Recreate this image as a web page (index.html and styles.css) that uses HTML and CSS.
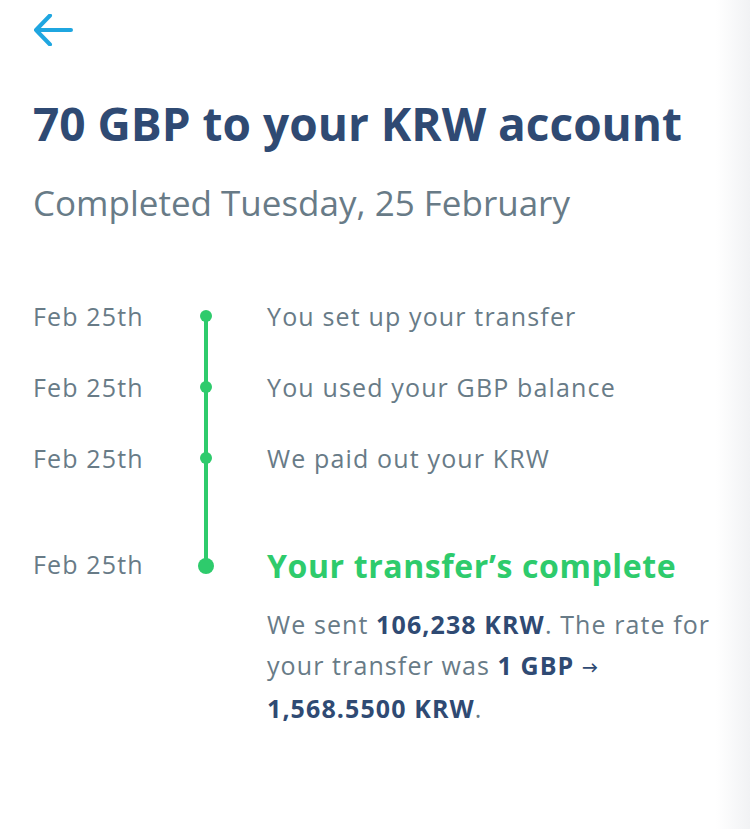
FILE: index.html
```html
<!DOCTYPE html>
<html lang="en">
<head>
    <meta charset="UTF-8">
    <meta name="viewport" content="width=device-width, initial-scale=1.0">
    <title>70 GBP to your KRW account</title>
    <link rel="stylesheet" href="styles.css">
</head>
<body>
  <div class="page">
      <a class="back" href="#" aria-label="Back">
          <svg width="40" height="32" viewBox="0 0 40 32">
              <path d="M38 16H3M17 1.5L3 16l14 14.5" fill="none" stroke="#1fa6e0" stroke-width="4" stroke-linecap="round" stroke-linejoin="round"/>
          </svg>
      </a>

      <h1 class="title">70 GBP to your KRW account</h1>
      <p class="subtitle">Completed Tuesday, 25 February</p>

      <!-- transfer steps -->
      <ol class="timeline">
          <li class="event event-first">
              <span class="event-date">Feb 25th</span>
              <span class="event-marker"><span class="dot"></span></span>
              <div class="event-body">You set up your transfer</div>
          </li>
          <li class="event">
              <span class="event-date">Feb 25th</span>
              <span class="event-marker"><span class="dot"></span></span>
              <div class="event-body">You used your GBP balance</div>
          </li>
          <li class="event">
              <span class="event-date">Feb 25th</span>
              <span class="event-marker"><span class="dot"></span></span>
              <div class="event-body">We paid out your KRW</div>
          </li>
          <li class="event event-done">
              <span class="event-date">Feb 25th</span>
              <span class="event-marker"><span class="dot"></span></span>
              <div class="event-body">
                  <h2>Your transfer’s complete</h2>
                  <p>We sent <strong>106,238 KRW</strong>. The rate for your transfer was <strong>1 GBP <span class="arrow">→</span> 1,568.5500 KRW</strong>.</p>
              </div>
          </li>
      </ol>
  </div>
</body>
</html>
```

FILE: styles.css
```css
body {
    font-family: "Open Sans", Lato, sans-serif;
    margin: 0;
    padding: 0;
    color: #687b87;
    background: linear-gradient(to right, #fff 0, #fff 716px, #f1f2f4 750px);
    min-height: 829px;
}
.page {
    padding: 14px 30px 40px 33px;
}
.back {
    display: block;
    width: 40px;
    height: 32px;
}
.back svg {
    display: block;
}
.title {
    margin: 48px 0 0;
    font-size: 46px;
    line-height: 58px;
    font-weight: 700;
    color: #2f4a73;
}
.subtitle {
    margin: 29px 0 0;
    font-size: 35px;
    line-height: 44px;
    font-weight: 400;
}
.timeline {
    list-style: none;
    margin: 73px 0 0;
    padding: 0;
}
.event {
    display: grid;
    grid-template-columns: 150px 46px 1fr;
    font-size: 25px;
    line-height: 36px;
    letter-spacing: 1.15px;
}
.event > * {
    padding-bottom: 35px;
}
.event-marker {
    display: flex;
    justify-content: center;
    align-items: flex-start;
    background: linear-gradient(#2ecb6c, #2ecb6c) center top / 4px 100% no-repeat;
}
.event-first .event-marker {
    background-position: center bottom;
    background-size: 4px calc(100% - 18px);
}
.dot {
    width: 12px;
    height: 12px;
    margin-top: 12px;
    border-radius: 50%;
    background-color: #2ecb6c;
}
.event-body {
    padding-left: 38px;
}
.event-done > * {
    padding-top: 33px;
    padding-bottom: 0;
}
.event-done .event-date {
    line-height: 40px;
}
.event-done .event-marker {
    background-size: 4px 55px;
}
.event-done .dot {
    width: 16px;
    height: 16px;
    margin-top: 14px;
}
.event-body h2 {
    margin: 0;
    font-size: 32px;
    line-height: 44px;
    font-weight: 700;
    letter-spacing: 0.6px;
    color: #2ecb6c;
}
.event-body p {
    margin: 16px 0 0;
    line-height: 41px;
    letter-spacing: 1.1px;
}
.event-body strong {
    font-weight: 700;
    color: #2f4a73;
}
.arrow {
    font-size: 16px;
    vertical-align: 2px;
}
```
